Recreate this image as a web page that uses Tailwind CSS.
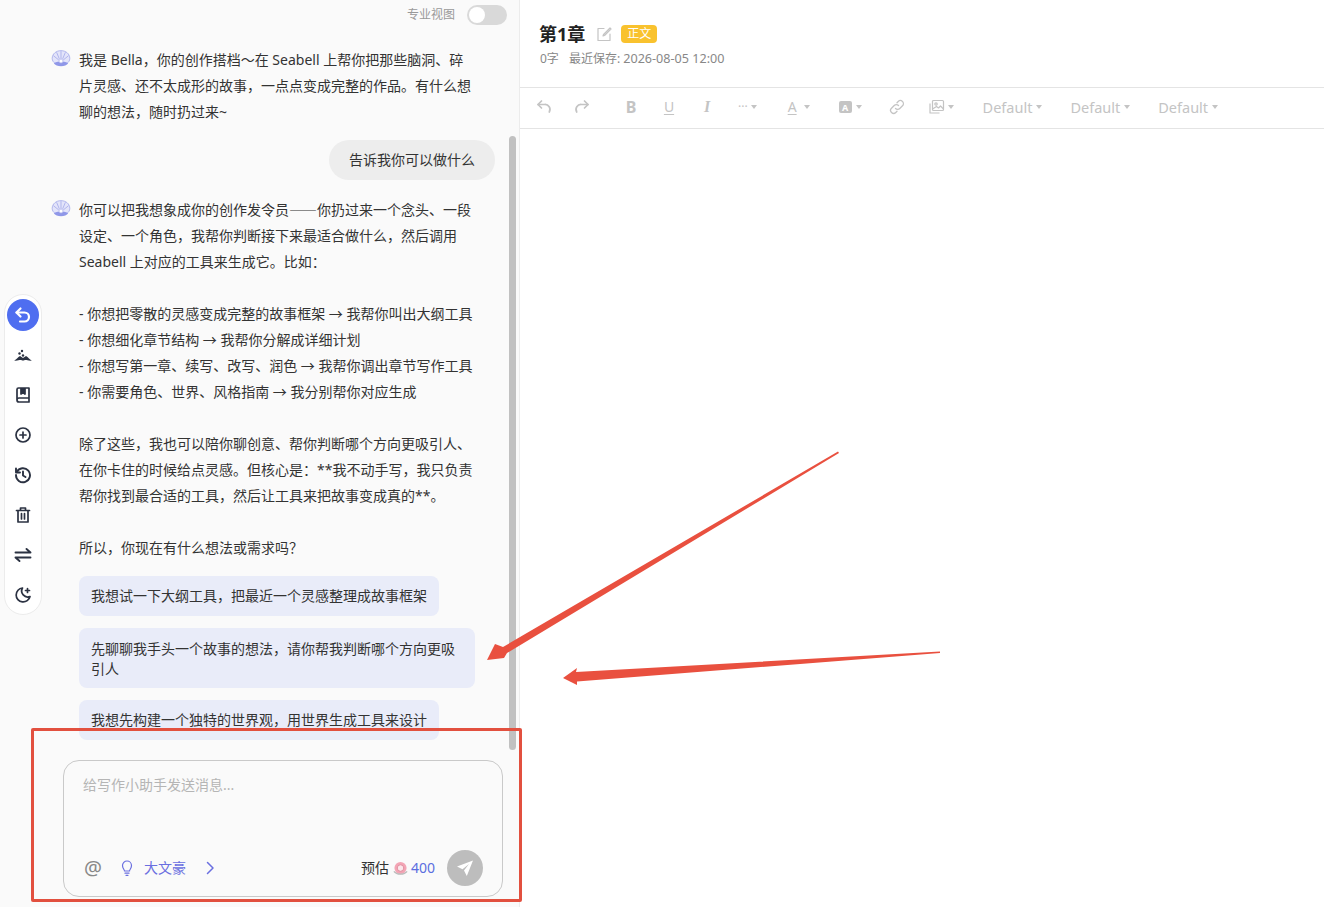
<!DOCTYPE html>
<html lang="zh-CN">
<head>
<meta charset="UTF-8" />
<title>Seabell</title>
<script src="https://cdn.jsdelivr.net/npm/@tailwindcss/browser@4"></script>
</head>
<body class="bg-white text-[#333] font-['Noto_Sans','Noto_Sans_CJK_SC',sans-serif] overflow-hidden">
<div class="relative flex w-[1324px] h-[907px] overflow-hidden">

  <!-- Chat panel -->
  <aside class="relative w-[520px] h-full shrink-0 bg-[#fafafa] border-r border-[#ececec]">
    <div class="h-[740px] overflow-hidden">
      <div class="flex items-center justify-end h-[30px] pr-3 gap-3">
        <span class="text-xs text-[#999]">专业视图</span>
        <span class="flex items-center w-10 h-5 rounded-full bg-[#d9d9d9] pl-0.5"><span class="w-4 h-4 rounded-full bg-white"></span></span>
      </div>

      <div class="flex gap-[7px] pl-[50px] mt-[17px]">
        <svg class="w-[22px] h-[22px] mt-[2px] shrink-0" viewBox="0 0 20 20"><path d="M2 8.5C2 4.500 5.500 1.500 10 1.500s8 3 8 7c0 2-1 3.500-2.500 4.500h-11C3 12 2 10.500 2 8.500z" fill="#e3e4fa" stroke="#a9aeea" stroke-width=".8"/><path d="M10 2v7M6 3l2.500 6M14 3l-2.500 6M3 6l5 4M17 6l-5 4" stroke="#a9aeea" stroke-width=".8" fill="none"/><path d="M3.500 13c2 3.500 11 3.500 13 0-2-1.500-3.500-1.500-4.500-1.500H8c-1 0-2.500 0-4.500 1.500z" fill="#8f97e8"/><circle cx="10" cy="11" r="1.800" fill="#fff" stroke="#a9aeea" stroke-width=".6"/></svg>
        <p class="text-sm leading-[26px] whitespace-nowrap">我是 Bella，你的创作搭档～在 Seabell 上帮你把那些脑洞、碎<br>片灵感、还不太成形的故事，一点点变成完整的作品。有什么想<br>聊的想法，随时扔过来~</p>
      </div>

      <div class="flex justify-end pr-6 mt-[15px]">
        <div class="h-10 px-5 rounded-[20px] bg-[#ededed] text-sm leading-10">告诉我你可以做什么</div>
      </div>

      <div class="flex gap-[7px] pl-[50px] mt-[17px]">
        <svg class="w-[22px] h-[22px] mt-[2px] shrink-0" viewBox="0 0 20 20"><path d="M2 8.5C2 4.500 5.500 1.500 10 1.500s8 3 8 7c0 2-1 3.500-2.500 4.500h-11C3 12 2 10.500 2 8.500z" fill="#e3e4fa" stroke="#a9aeea" stroke-width=".8"/><path d="M10 2v7M6 3l2.500 6M14 3l-2.500 6M3 6l5 4M17 6l-5 4" stroke="#a9aeea" stroke-width=".8" fill="none"/><path d="M3.500 13c2 3.500 11 3.500 13 0-2-1.500-3.500-1.500-4.500-1.500H8c-1 0-2.500 0-4.500 1.500z" fill="#8f97e8"/><circle cx="10" cy="11" r="1.800" fill="#fff" stroke="#a9aeea" stroke-width=".6"/></svg>
        <p class="text-sm leading-[26px] whitespace-nowrap">你可以把我想象成你的创作发令员<span class="leading-none font-['Noto_Sans_CJK_SC',sans-serif]">——</span>你扔过来一个念头、一段<br>设定、一个角色，我帮你判断接下来最适合做什么，然后调用<br>Seabell 上对应的工具来生成它。比如：<br><br>- 你想把零散的灵感变成完整的故事框架 → 我帮你叫出大纲工具<br>- 你想细化章节结构 → 我帮你分解成详细计划<br>- 你想写第一章、续写、改写、润色 → 我帮你调出章节写作工具<br>- 你需要角色、世界、风格指南 → 我分别帮你对应生成<br><br>除了这些，我也可以陪你聊创意、帮你判断哪个方向更吸引人、<br>在你卡住的时候给点灵感。但核心是：**我不动手写，我只负责<br>帮你找到最合适的工具，然后让工具来把故事变成真的**。<br><br>所以，你现在有什么想法或需求吗？</p>
      </div>

      <div class="flex flex-col items-start gap-3 pl-[79px] mt-[15px] text-sm leading-5">
        <div class="px-3 py-2.5 rounded-lg bg-[#e9ecf9]">我想试一下大纲工具，把最近一个灵感整理成故事框架</div>
        <div class="w-[396px] px-3 pt-[11px] pb-[9px] rounded-lg bg-[#e9ecf9]">先聊聊我手头一个故事的想法，请你帮我判断哪个方向更吸引人</div>
        <div class="px-3 py-2.5 rounded-lg bg-[#e9ecf9]">我想先构建一个独特的世界观，用世界生成工具来设计</div>
      </div>
    </div>

    <!-- Composer -->
    <div class="flex flex-col justify-between w-[440px] h-[137px] ml-[63px] mt-5 pl-[19px] pr-5 pt-3.5 pb-2.5 rounded-2xl border border-[#c9c9c9]">
      <div class="text-sm leading-5 text-[#b5b5b5]">给写作小助手发送消息...</div>
      <div class="flex items-center h-9 -mr-[1px]">
        <span class="w-5 text-center text-xl leading-none text-[#888]">@</span>
        <svg class="w-[18px] h-[18px] ml-[15px] text-[#6a6fe0]" viewBox="0 0 18 18" fill="none" stroke="currentColor" stroke-width="1.200" stroke-linecap="round"><path d="M6.500 12c0-1.500-2-2.500-2-5.500a4.500 4.500 0 0 1 9 0c0 3-2 4-2 5.500z"/><path d="M7 14.200h4M8 16.300h2"/></svg>
        <span class="ml-2 text-sm text-[#6a6fe0]">大文豪</span>
        <svg class="w-4 h-4 ml-4 text-[#6a6fe0]" viewBox="0 0 16 16" fill="none" stroke="currentColor" stroke-width="1.500" stroke-linecap="round" stroke-linejoin="round"><path d="M5.500 2.500 11 8l-5.500 5.500"/></svg>
        <span class="ml-auto text-sm text-[#333]">预估</span>
        <svg class="w-[15px] h-[15px] ml-1" viewBox="0 0 16 16"><circle cx="8" cy="7.500" r="6.500" fill="#f3a5b5"/><circle cx="8" cy="7.500" r="3.500" fill="#fbe6ea" stroke="#df8a9c"/><path d="M1 11c3 4 11 4 14 0" stroke="#bbb" stroke-width="1.500" fill="none"/></svg>
        <span class="ml-[3px] text-sm text-[#5b6ee0]">400</span>
        <span class="flex items-center justify-center w-9 h-9 ml-3 rounded-full bg-[#bdbdbd]">
          <svg class="w-5 h-5" viewBox="0 0 20 20"><path d="M18 2.500 2 8.500l5.500 2.800L14 6l-5 6.500 2.800 5.500z" fill="#fff"/></svg>
        </span>
      </div>
    </div>

    <!-- Scrollbar -->
    <div class="absolute left-[509px] top-[136px] w-[7px] h-[614px] rounded-full bg-[#c1c1c1]"></div>

    <!-- Side rail -->
    <div class="absolute left-[4px] top-[294px] flex flex-col items-center w-[38px] h-[321px] pt-1 rounded-full bg-white border border-[#ececec] text-[#2b3242]">
      <span class="flex items-center justify-center w-8 h-8 rounded-full bg-[#4f6ef0]">
        <svg class="w-5 h-5 text-white" viewBox="0 0 20 20" fill="none" stroke="currentColor" stroke-width="2.200" stroke-linecap="round" stroke-linejoin="round"><path d="M7.500 3.500 3.500 7.500l4 4"/><path d="M3.500 7.500h8a4.500 4.500 0 0 1 0 9H7"/></svg>
      </span>
      <svg class="w-[18px] h-[18px] mt-[15px]" viewBox="0 0 18 18" fill="currentColor"><path d="M0 14.500c2-.5 4-3.500 6-4.500l3 2 3-2c2 1 4 4 6 4.500-3 .5-5-.5-6.500-.5-.8 0-1.500.6-2.500.6s-1.700-.6-2.500-.6c-1.500 0-3.500 1-6.500.5z"/><circle cx="5.500" cy="7.500" r="1.200"/><circle cx="9" cy="9.500" r="1.200"/><circle cx="8" cy="5" r="1.200"/></svg>
      <svg class="w-[18px] h-[18px] mt-[22px]" viewBox="0 0 18 18" fill="none" stroke="currentColor" stroke-width="1.700" stroke-linejoin="round"><path d="M3 14V3.500A1.500 1.500 0 0 1 4.500 2H15v14H5a2 2 0 0 1-2-2zM3 14a2 2 0 0 1 2-2h10"/><path d="M7 2v6l2-1.500L11 8V2" fill="currentColor"/></svg>
      <svg class="w-[18px] h-[18px] mt-[22px]" viewBox="0 0 18 18" fill="none" stroke="currentColor" stroke-width="1.700" stroke-linecap="round"><circle cx="9" cy="9" r="7"/><path d="M9 6v6M6 9h6"/></svg>
      <svg class="w-[18px] h-[18px] mt-[22px]" viewBox="0 0 18 18" fill="none" stroke="currentColor" stroke-width="1.900" stroke-linecap="round" stroke-linejoin="round"><path d="M2.800 6A7 7 0 1 1 2 9"/><path d="M2 2.500V6.500h4"/><path d="M9 5.500V9.500l2.500 1.500"/></svg>
      <svg class="w-[18px] h-[18px] mt-[22px]" viewBox="0 0 18 18" fill="none" stroke="currentColor" stroke-width="1.700" stroke-linecap="round" stroke-linejoin="round"><path d="M2.500 4.500h13M6.500 4.500V2h5v2.500M4 4.500V16h10V4.500"/><path d="M7.500 7.500v5.500M10.500 7.500v5.500"/></svg>
      <svg class="w-[18px] h-[18px] mt-[22px]" viewBox="0 0 18 18" fill="none" stroke="currentColor" stroke-width="1.900" stroke-linecap="round" stroke-linejoin="round"><path d="M1.500 6.500h15L12.500 3"/><path d="M16.500 11.500h-15L5.500 15"/></svg>
      <svg class="w-[18px] h-[18px] mt-[22px]" viewBox="0 0 18 18" fill="none" stroke="currentColor" stroke-width="1.700" stroke-linecap="round" stroke-linejoin="round"><path d="M8.500 2a7 7 0 1 0 7.500 8.500A6 6 0 0 1 8.500 2z"/><path d="M13.500 2.500v4M11.500 4.500h4"/></svg>
    </div>
  </aside>

  <!-- Editor -->
  <main class="flex-1">
    <header class="h-[88px] pl-5 pt-[21px] border-b border-[#e4e4e4]">
      <div class="flex items-center h-[26px]">
        <h1 class="-ml-px text-lg font-bold leading-[26px] text-[#222]">第1章</h1>
        <svg class="w-4 h-4 ml-[11px] text-[#c4c4c4]" viewBox="0 0 16 16" fill="none" stroke="currentColor" stroke-width="1.200" stroke-linecap="round" stroke-linejoin="round"><path d="M8 2.500H2v12h12V8"/><path d="M14 2 7.500 8.500 7 10l1.500-.5L15 3z"/></svg>
        <span class="ml-[9px] w-9 h-[18px] rounded-[4px] bg-[#f9c22e] text-center text-xs leading-[18px] text-white">正文</span>
      </div>
      <p class="mt-[2px] text-xs leading-5 text-[#888]"><span>0字</span><span class="ml-2.5">最近保存: <span class="text-[12.6px]">2026-08-05 12:00</span></span></p>
    </header>

    <div class="flex items-center h-[41px] pl-4 pb-0.5 border-b border-[#e4e4e4] text-[#c4c4c4]">
      <svg class="w-4 h-4" viewBox="0 0 16 16" fill="none" stroke="currentColor" stroke-width="1.700" stroke-linecap="round" stroke-linejoin="round"><path d="M5.500 2 2 5.500l3.500 3.500"/><path d="M2 5.500h6.500a5 5 0 0 1 4.800 7.500"/></svg>
      <svg class="w-4 h-4 ml-[22px]" viewBox="0 0 16 16" fill="none" stroke="currentColor" stroke-width="1.700" stroke-linecap="round" stroke-linejoin="round"><path d="M10.500 2 14 5.500 10.500 9"/><path d="M14 5.500H7.500A5 5 0 0 0 2.700 13"/></svg>
      <span class="w-4 ml-[33px] text-center text-base font-bold leading-none">B</span>
      <span class="w-4 ml-[22px] text-center text-sm leading-none underline underline-offset-2">U</span>
      <span class="w-4 ml-[22px] text-center text-base font-bold italic leading-none font-['Liberation_Serif',serif]">I</span>
      <span class="ml-[23px] text-xs leading-none">···</span>
      <span class="ml-[3px] border-x-[3px] border-t-[4px] border-x-transparent border-t-[#c4c4c4]"></span>
      <span class="ml-[31px] text-sm leading-none underline underline-offset-2">A</span>
      <span class="ml-[7px] border-x-[3px] border-t-[4px] border-x-transparent border-t-[#c4c4c4]"></span>
      <span class="flex items-center justify-center ml-[29px] w-[13px] h-[12px] rounded-[2px] bg-[#c4c4c4] text-[9px] font-bold leading-none text-white">A</span>
      <span class="ml-[4px] border-x-[3px] border-t-[4px] border-x-transparent border-t-[#c4c4c4]"></span>
      <svg class="w-4 h-4 ml-[27px]" viewBox="0 0 16 16" fill="none" stroke="currentColor" stroke-width="1.300" stroke-linecap="round"><path d="M6.500 9.500a3 3 0 0 0 4.300 0l2.700-2.700a3 3 0 0 0-4.300-4.300L8 3.700"/><path d="M9.500 6.500a3 3 0 0 0-4.300 0L2.500 9.200a3 3 0 0 0 4.300 4.300L8 12.300"/></svg>
      <svg class="w-4 h-4 ml-[24px]" viewBox="0 0 16 16" fill="none" stroke="currentColor" stroke-width="1.200" stroke-linejoin="round"><path d="M1 4.500v9.500h9.500"/><rect x="3.500" y="1.500" width="11" height="10" rx="1"/><circle cx="7" cy="5" r="1.200"/><path d="M3.500 10 7.500 7.500l2 1.500 2-2 3 3"/></svg>
      <span class="ml-[3px] border-x-[3px] border-t-[4px] border-x-transparent border-t-[#c4c4c4]"></span>
      <span class="ml-[29px] text-[14.5px] leading-none">Default</span>
      <span class="ml-[4px] border-x-[3px] border-t-[4px] border-x-transparent border-t-[#c4c4c4]"></span>
      <span class="ml-[28px] text-[14.5px] leading-none">Default</span>
      <span class="ml-[4px] border-x-[3px] border-t-[4px] border-x-transparent border-t-[#c4c4c4]"></span>
      <span class="ml-[28px] text-[14.5px] leading-none">Default</span>
      <span class="ml-[4px] border-x-[3px] border-t-[4px] border-x-transparent border-t-[#c4c4c4]"></span>
    </div>
  </main>

  <!-- Annotations drawn over the screenshot -->
  <div class="absolute left-[31px] top-[728px] w-[491px] h-[174px] rounded-[2px] border-[3px] border-[#e2503f]"></div>
  <svg class="absolute left-0 top-0 pointer-events-none" width="1324" height="907" viewBox="0 0 1324 907">
    <path d="M838 451.500 503 647 495 644 487 660 504 658 507 653 839 453z" fill="#e9503f"/>
    <path d="M940 651.500 576 672 577 668 563 678 577 685 577 681.500 940 653z" fill="#e9503f"/>
  </svg>
</div>
</body>
</html>
